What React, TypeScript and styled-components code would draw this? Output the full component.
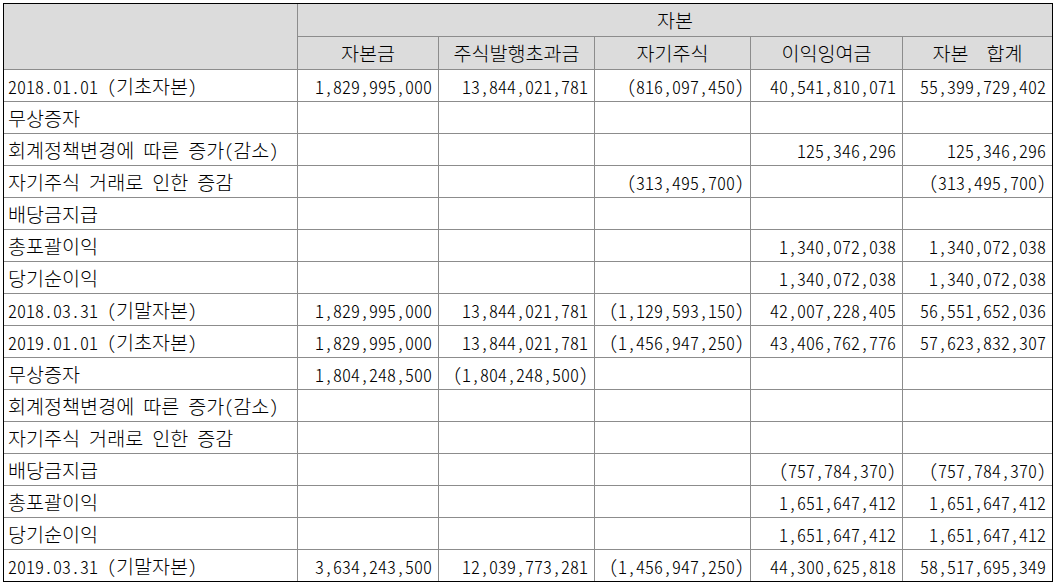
import styled, { createGlobalStyle } from "styled-components";

const GlobalStyle = createGlobalStyle`
  body {
    margin: 3px;
    background: #ffffff;
    font-family: "Noto Sans CJK KR", "Noto Sans", sans-serif;
    color: #000000;
  }
`;

// column labels under 자본
const capitalCols = ["자본금", "주식발행초과금", "자기주식", "이익잉여금", "자본\u00a0\u00a0합계"];

const rows: string[][] = [
  ["2018.01.01 (기초자본)", "1,829,995,000", "13,844,021,781", "(816,097,450)", "40,541,810,071", "55,399,729,402"],
  ["무상증자", "", "", "", "", ""],
  ["회계정책변경에 따른 증가(감소)", "", "", "", "125,346,296", "125,346,296"],
  ["자기주식 거래로 인한 증감", "", "", "(313,495,700)", "", "(313,495,700)"],
  ["배당금지급", "", "", "", "", ""],
  ["총포괄이익", "", "", "", "1,340,072,038", "1,340,072,038"],
  ["당기순이익", "", "", "", "1,340,072,038", "1,340,072,038"],
  ["2018.03.31 (기말자본)", "1,829,995,000", "13,844,021,781", "(1,129,593,150)", "42,007,228,405", "56,551,652,036"],
  ["2019.01.01 (기초자본)", "1,829,995,000", "13,844,021,781", "(1,456,947,250)", "43,406,762,776", "57,623,832,307"],
  ["무상증자", "1,804,248,500", "(1,804,248,500)", "", "", ""],
  ["회계정책변경에 따른 증가(감소)", "", "", "", "", ""],
  ["자기주식 거래로 인한 증감", "", "", "", "", ""],
  ["배당금지급", "", "", "", "(757,784,370)", "(757,784,370)"],
  ["총포괄이익", "", "", "", "1,651,647,412", "1,651,647,412"],
  ["당기순이익", "", "", "", "1,651,647,412", "1,651,647,412"],
  ["2019.03.31 (기말자본)", "3,634,243,500", "12,039,773,281", "(1,456,947,250)", "44,300,625,818", "58,517,695,349"],
];

function Txt({ text }: { text: string }) {
  const parts = text.split(/([\uAC00-\uD7A3]+)/);
  return (
    <span>
      {parts.map((p, i) => (i % 2 === 1 ? <Hangul key={i}>{p}</Hangul> : p))}
    </span>
  );
}

export default function App() {
  return (
    <>
      <GlobalStyle />
      <Sheet>
        <CornerCell />
        <GroupHead>
          <Txt text="자본" />
        </GroupHead>
        {capitalCols.map((c) => (
          <HeadCell key={c}>
            <Txt text={c} />
          </HeadCell>
        ))}
        {rows.map((r, i) =>
          r.map((v, j) =>
            j === 0 ? (
              <LabelCell key={i + "-" + j}>
                <Txt text={v} />
              </LabelCell>
            ) : (
              <NumCell key={i + "-" + j}>{v}</NumCell>
            )
          )
        )}
      </Sheet>
    </>
  );
}

const Sheet = styled.div`
  display: grid;
  width: max-content;
  grid-template-columns: 293px 140px 155px 155px 151px 149px;
  grid-template-rows: 32px 32px repeat(16, 31px);
  gap: 1px;
  background: #8c8c8c;
  border: 1px solid #000000;
  font-size: 18px;
  font-weight: 300;
  font-feature-settings: "hwid";
  line-height: 1;
`;

const Cell = styled.div`
  display: flex;
  align-items: center;
  white-space: pre;
  overflow: hidden;
  background: #ffffff;
`;

const Hangul = styled.span`
  font-size: 19.6px;
`;

const HeadCell = styled(Cell)`
  justify-content: center;
  background: #dcdcdc;
`;

const CornerCell = styled(HeadCell)`
  grid-row: span 2;
`;

const GroupHead = styled(HeadCell)`
  grid-column: span 5;
`;

const LabelCell = styled(Cell)`
  padding-left: 4px;
`;

const NumCell = styled(Cell)`
  justify-content: flex-end;
  padding-right: 6px;
`;
